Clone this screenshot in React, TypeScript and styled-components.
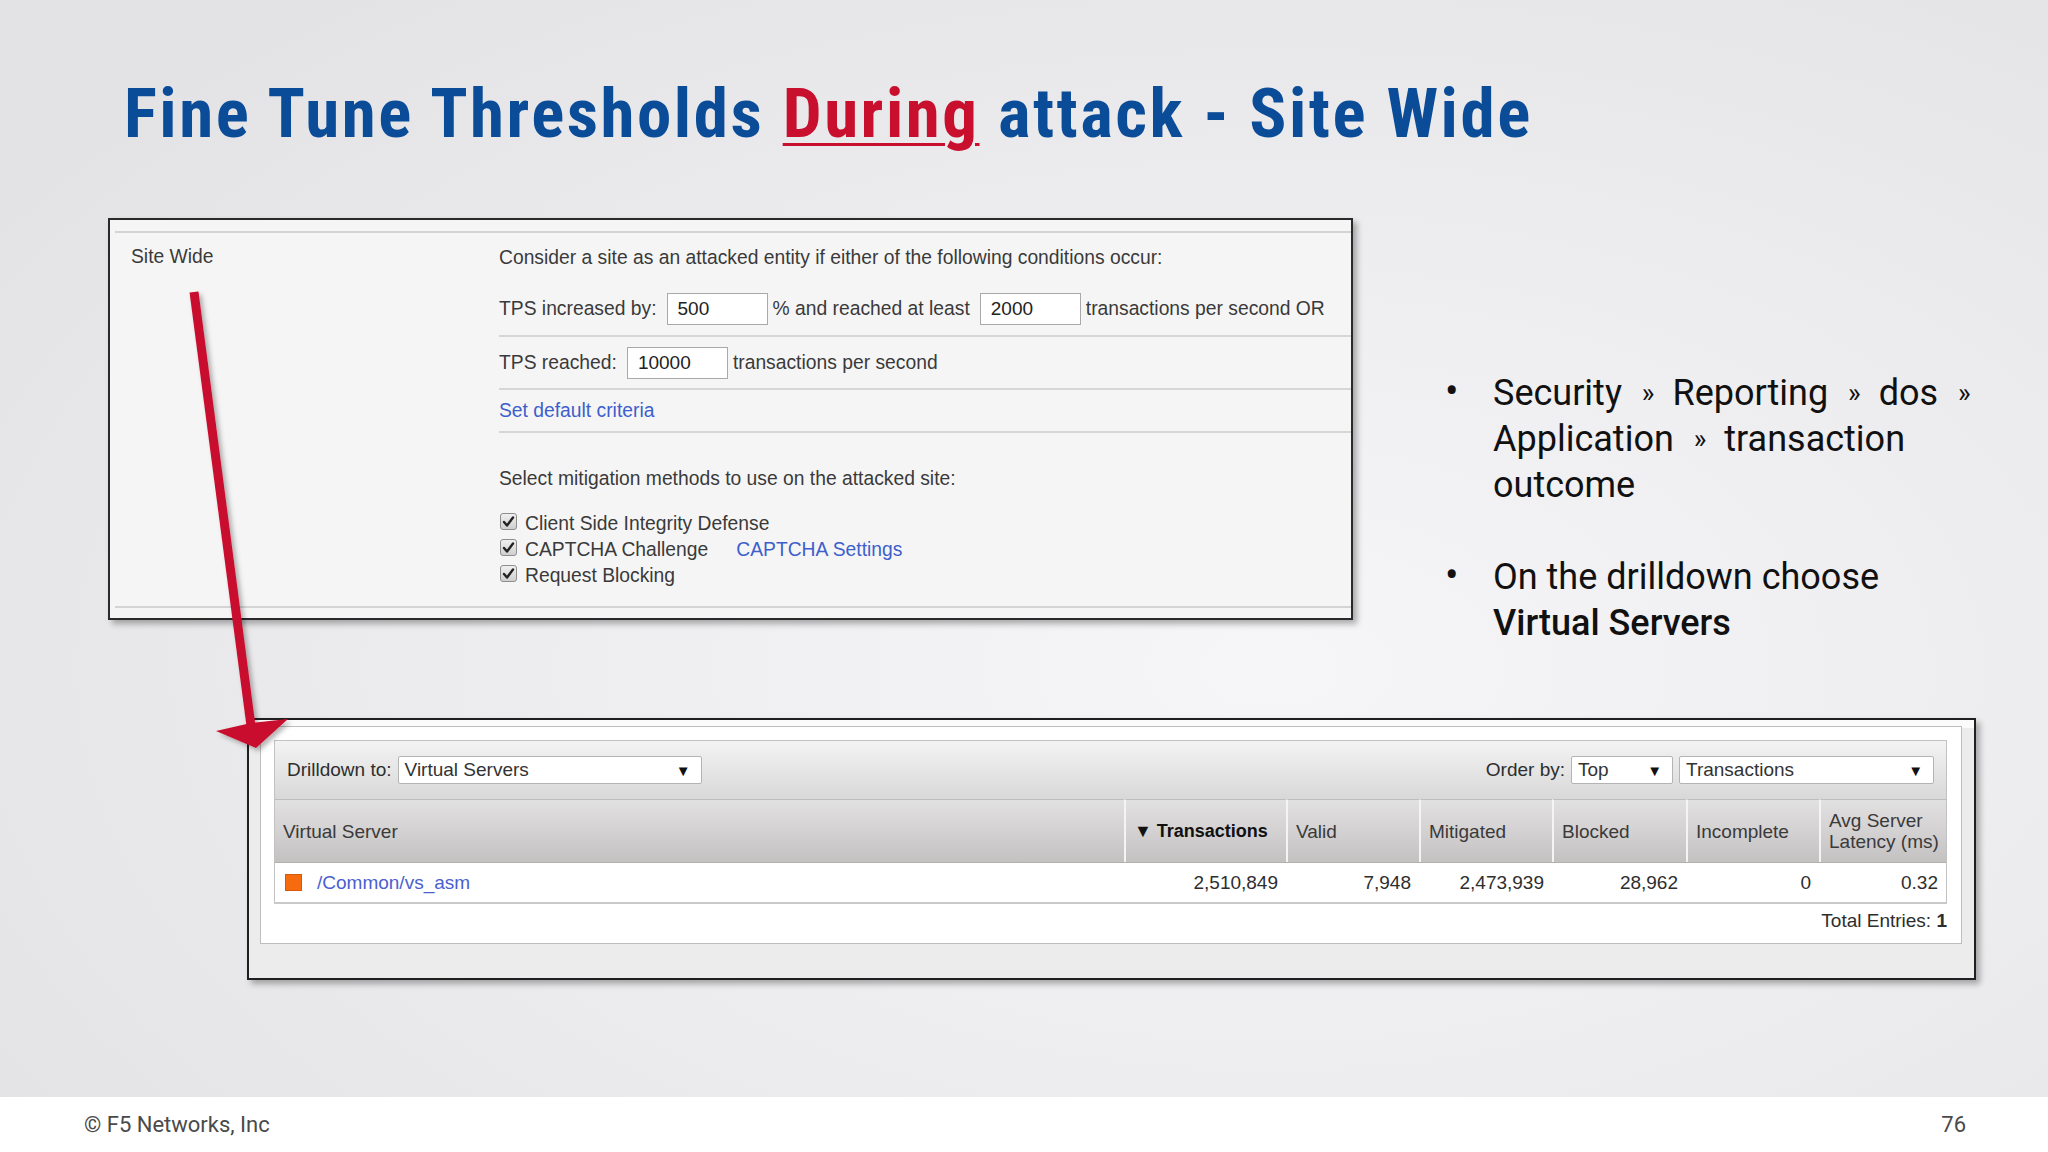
import React from 'react';
import styled, { createGlobalStyle } from 'styled-components';

const GlobalStyle = createGlobalStyle`
    html, body {
        margin: 0;
        padding: 0;
    }
    body {
        background: #e8e8ea;
        font-family: "Liberation Sans", Arial, sans-serif;
    }
`

type Column = {
    title: React.ReactNode,
    value: string,
    sorted?: boolean,
}

const columns: Column[] = [
    { title: <>▼ Transactions</>, value: '2,510,849', sorted: true },
    { title: 'Valid', value: '7,948' },
    { title: 'Mitigated', value: '2,473,939' },
    { title: 'Blocked', value: '28,962' },
    { title: 'Incomplete', value: '0' },
    { title: <>Avg Server<br />Latency (ms)</>, value: '0.32' },
]

const Check = () => (
    <CheckBox>
        <svg width="13" height="13" viewBox="0 0 13 13">
            <path d="M2 7 L5 10.5 L11 2.5" fill="none" stroke="#222" strokeWidth="2.4" strokeLinecap="round" strokeLinejoin="round" />
        </svg>
    </CheckBox>
)

const Chevrons = () => <Chev>»</Chev>

const App: React.FC = () => {
    return (
        <>
            <GlobalStyle />
            <Slide>
                <TitleBar>
                    <Title>Fine Tune Thresholds <Red>During</Red> attack - Site Wide</Title>
                </TitleBar>

                <Upper>
                    <SettingsPanel>
                        <Rule />
                        <SettingsBody>
                            <SideLabel>Site Wide</SideLabel>
                            <Fields>
                                <Row height={50}>Consider a site as an attacked entity if either of the following conditions occur:</Row>
                                <Row height={52} divider>
                                    TPS increased by:
                                    <NumberBox readOnly defaultValue="500" />
                                    % and reached at least
                                    <NumberBox readOnly defaultValue="2000" />
                                    transactions per second OR
                                </Row>
                                <Row height={51} divider>
                                    TPS reached:
                                    <NumberBox readOnly defaultValue="10000" />
                                    transactions per second
                                </Row>
                                <Row height={41} divider>
                                    <Link>Set default criteria</Link>
                                </Row>
                                <Mitigation>
                                    <div>Select mitigation methods to use on the attacked site:</div>
                                    <Checks>
                                        <CheckRow><Check />Client Side Integrity Defense</CheckRow>
                                        <CheckRow><Check />CAPTCHA Challenge <SettingsLink>CAPTCHA Settings</SettingsLink></CheckRow>
                                        <CheckRow><Check />Request Blocking</CheckRow>
                                    </Checks>
                                </Mitigation>
                            </Fields>
                        </SettingsBody>
                        <Rule bottom />
                    </SettingsPanel>

                    <Bullets>
                        <Bullet>
                            Security <Chevrons /> Reporting <Chevrons /> dos <Chevrons /><br />
                            Application <Chevrons /> transaction<br />
                            outcome
                        </Bullet>
                        <Bullet>
                            On the drilldown choose<br />
                            <Strong>Virtual Servers</Strong>
                        </Bullet>
                    </Bullets>
                </Upper>

                <ReportPanel>
                    <ReportInner>
                        <Toolbar>
                            <ToolGroup>
                                <ToolLabel>Drilldown to:</ToolLabel>
                                <Select width={304}>Virtual Servers<Caret>▼</Caret></Select>
                            </ToolGroup>
                            <ToolGroup>
                                <ToolLabel>Order by:</ToolLabel>
                                <Select width={102}>Top<Caret>▼</Caret></Select>
                                <Select width={255}>Transactions<Caret>▼</Caret></Select>
                            </ToolGroup>
                        </Toolbar>
                        <Table>
                            <HeadCell first>Virtual Server</HeadCell>
                            {columns.map((c, i) => (
                                <HeadCell key={i} sorted={c.sorted}>{c.title}</HeadCell>
                            ))}
                            <NameCell><Swatch /><ServerLink>/Common/vs_asm</ServerLink></NameCell>
                            {columns.map((c, i) => (
                                <ValueCell key={i}>{c.value}</ValueCell>
                            ))}
                        </Table>
                        <Total>Total Entries: <b>1</b></Total>
                    </ReportInner>
                </ReportPanel>

                <Footer>
                    <span>© F5 Networks, Inc</span>
                    <span>76</span>
                </Footer>

                <Arrow viewBox="0 0 2048 1152" width="2048" height="1152">
                    <defs>
                        <filter id="shade" x="-20%" y="-20%" width="140%" height="140%">
                            <feDropShadow dx="3" dy="3" stdDeviation="2.5" floodColor="#000" floodOpacity="0.3" />
                        </filter>
                    </defs>
                    <g filter="url(#shade)" fill="#c8102e">
                        <line x1="194" y1="292" x2="251" y2="726" stroke="#c8102e" strokeWidth="9" />
                        <polygon points="216,731 251,723 288,719 256,748" />
                    </g>
                </Arrow>
            </Slide>
        </>
    )
}

export default App;

const Slide = styled.div`
    position: relative;
    width: 2048px;
    height: 1152px;
    overflow: hidden;
    display: flex;
    flex-direction: column;
    background: radial-gradient(ellipse 75% 75% at 62% 58%, #f6f5f7 0%, #eeedef 45%, #e3e3e5 100%);
`

const TitleBar = styled.div`
    height: 218px;
    box-sizing: border-box;
    padding: 74px 0 0 124px;
`

const Title = styled.h1`
    margin: 0;
    font-family: "Liberation Sans Narrow", "Roboto Condensed", Roboto, sans-serif;
    font-weight: bold;
    font-size: 69px;
    line-height: 80px;
    letter-spacing: 2.5px;
    color: #0b4c99;
    white-space: nowrap;
`

const Red = styled.span`
    color: #c8102e;
    text-decoration: underline;
    text-decoration-thickness: 3px;
    text-underline-offset: 6px;
`

const Upper = styled.div`
    height: 402px;
    display: flex;
    align-items: flex-start;
    padding-left: 108px;
`

const SettingsPanel = styled.div`
    width: 1245px;
    height: 402px;
    box-sizing: border-box;
    border: 2px solid #2a2a2a;
    background: #f6f5f6;
    box-shadow: 4px 4px 6px rgba(0, 0, 0, 0.3);
    display: flex;
    flex-direction: column;
`

const Rule = styled.div<{ bottom?: boolean }>`
    height: ${p => p.bottom ? 10 : 11}px;
    margin: 0 0 0 5px;
    ${p => p.bottom
        ? 'border-top: 2px solid #d4d4d4;'
        : 'border-bottom: 2px solid #d4d4d4;'}
`

const SettingsBody = styled.div`
    flex: 1;
    display: grid;
    grid-template-columns: 389px 1fr;
    font-size: 19.3px;
    color: #3a3a3a;
`

const SideLabel = styled.div`
    padding: 13px 0 0 21px;
    line-height: 22px;
`

const Fields = styled.div`
    display: flex;
    flex-direction: column;
`

const Row = styled.div<{ height: number, divider?: boolean }>`
    height: ${p => p.height}px;
    display: flex;
    align-items: center;
    white-space: nowrap;
    border-bottom: ${p => p.divider ? '2px solid #d6d6d6' : 'none'};
`

const NumberBox = styled.input`
    width: 101px;
    height: 32px;
    box-sizing: border-box;
    margin: 0 5px 0 10px;
    padding: 0 10px;
    border: 1px solid #a9a9a9;
    background: #fff;
    font-family: "Liberation Sans", Arial, sans-serif;
    font-size: 19px;
    color: #222;
    outline: none;
`

const Link = styled.span`
    color: #3d5fcc;
`

const SettingsLink = styled(Link)`
    margin-left: 28px;
`

const Mitigation = styled.div`
    padding-top: 35px;
    line-height: 22px;
`

const Checks = styled.div`
    margin-top: 21px;
`

const CheckRow = styled.div`
    height: 26px;
    display: flex;
    align-items: center;
    white-space: nowrap;
`

const CheckBox = styled.span`
    width: 17px;
    height: 17px;
    box-sizing: border-box;
    margin: -5px 8px 0 1px;
    border: 1px solid #8e8e8e;
    border-radius: 3px;
    background: linear-gradient(#f0f0f0, #cfcfcf);
    display: inline-flex;
    align-items: center;
    justify-content: center;
`

const Bullets = styled.ul`
    list-style: none;
    margin: 0 0 0 98px;
    padding: 152px 0 0 0;
    font-family: Roboto, "Liberation Sans", sans-serif;
    font-size: 36px;
    line-height: 46px;
    color: #111;
`

const Bullet = styled.li`
    position: relative;
    padding-left: 42px;
    white-space: nowrap;
    & + & {
        margin-top: 46px;
    }
    &::before {
        content: '•';
        position: absolute;
        left: -6px;
        top: -1px;
        font-size: 40px;
    }
`

const Chev = styled.span`
    display: inline-block;
    margin: 0 9px 0 11px;
    font-size: 27px;
    vertical-align: 3px;
`

const Strong = styled.span`
    font-weight: 500;
`

const ReportPanel = styled.div`
    margin: 98px 0 0 247px;
    width: 1729px;
    height: 262px;
    box-sizing: border-box;
    padding: 6px 12px 0 11px;
    border: 2px solid #1f1f1f;
    background: linear-gradient(#fbfbfb 0, #fbfbfb 8px, #ececec 8px);
    box-shadow: 4px 4px 6px rgba(0, 0, 0, 0.3);
`

const ReportInner = styled.div`
    height: 218px;
    box-sizing: border-box;
    padding: 13px 14px 0 13px;
    border: 1px solid #bdbdbd;
    background: #fff;
    font-size: 19px;
    color: #333;
`

const Toolbar = styled.div`
    height: 59px;
    box-sizing: border-box;
    padding: 0 12px 0 12px;
    border: 1px solid #c2c2c2;
    border-bottom: none;
    background: linear-gradient(#f3f3f3, #d9d8d8);
    display: flex;
    align-items: center;
    justify-content: space-between;
`

const ToolGroup = styled.div`
    display: flex;
    align-items: center;
    gap: 6px;
`

const ToolLabel = styled.span`
    color: #2e2e2e;
`

const Select = styled.div<{ width: number }>`
    width: ${p => p.width}px;
    height: 28px;
    box-sizing: border-box;
    padding: 0 10px 0 6px;
    border: 1px solid #b4b4b4;
    border-radius: 2px;
    background: #fff;
    display: flex;
    align-items: center;
    justify-content: space-between;
    color: #333;
`

const Caret = styled.span`
    font-size: 15px;
    color: #111;
`

const Table = styled.div`
    display: grid;
    grid-template-columns: 849px 162px 133px 133px 134px 133px 1fr;
    grid-template-rows: 63px 40px;
    border-left: 1px solid #c2c2c2;
    border-right: 1px solid #c2c2c2;
    border-bottom: 2px solid #c9c9c9;
`

const HeadCell = styled.div<{ first?: boolean, sorted?: boolean }>`
    display: flex;
    align-items: center;
    padding: 0 6px 0 8px;
    line-height: 21px;
    white-space: nowrap;
    font-size: ${p => p.sorted ? 18 : 19}px;
    font-weight: ${p => p.sorted ? 'bold' : 'normal'};
    color: ${p => p.sorted ? '#111' : '#3a3a3a'};
    border-top: 1px solid #bdbdbd;
    border-left: ${p => p.first ? 'none' : '2px solid #f4f4f4'};
    background: linear-gradient(#e2e1e1, #c4c1c1);
`

const NameCell = styled.div`
    display: flex;
    align-items: center;
    padding-left: 10px;
    border-top: 1px solid #b0b0b0;
`

const Swatch = styled.span`
    width: 17px;
    height: 17px;
    background: #f56b0d;
    margin-right: 15px;
    box-shadow: inset 0 0 0 1px #d9590a;
`

const ServerLink = styled.span`
    color: #4a5fd0;
`

const ValueCell = styled.div`
    display: flex;
    align-items: center;
    justify-content: flex-end;
    padding-right: 8px;
    border-top: 1px solid #b0b0b0;
    color: #2e2e2e;
`

const Total = styled.div`
    padding-top: 6px;
    text-align: right;
    line-height: 22px;
    color: #2e2e2e;
`

const Footer = styled.div`
    margin-top: auto;
    height: 55px;
    box-sizing: border-box;
    padding: 0 82px 0 84px;
    background: #fff;
    display: flex;
    align-items: center;
    justify-content: space-between;
    font-family: Roboto, "Liberation Sans", sans-serif;
    font-size: 22px;
    color: #4a4a4a;
`

const Arrow = styled.svg`
    position: absolute;
    top: 0;
    left: 0;
    pointer-events: none;
`
